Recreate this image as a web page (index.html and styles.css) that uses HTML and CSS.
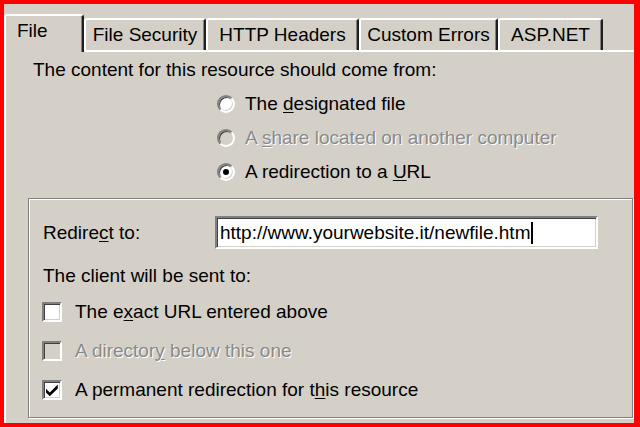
FILE: index.html
```html
<!DOCTYPE html>
<html lang="en">
<head>
<meta charset="utf-8">
<title>File properties</title>
<link rel="stylesheet" href="styles.css">
</head>
<body>
<div class="frame">
  <div class="tabs">
    <div class="tab tab--active tab--file">File</div>
    <div class="tab tab--security">File Security</div>
    <div class="tab tab--headers">HTTP Headers</div>
    <div class="tab tab--errors">Custom Errors</div>
    <div class="tab tab--aspnet">ASP.NET</div>
  </div>
  <div class="page">
    <p class="lead">The content for this resource should come from:</p>
    <div class="options">
      <div class="option"><span class="radio"></span><span>The <u>d</u>esignated file</span></div>
      <div class="option option--disabled"><span class="radio"></span><span>A <u>s</u>hare located on another computer</span></div>
      <div class="option"><span class="radio radio--checked"></span><span>A redirection to a <u>U</u>RL</span></div>
    </div>
    <div class="group">
      <div class="field">
        <span class="field-label">Redire<u>c</u>t to:</span>
        <div class="textbox">http://www.yourwebsite.it/newfile.htm<span class="caret"></span></div>
      </div>
      <p class="group-label">The client will be sent to:</p>
      <div class="checks">
        <div class="check-row"><span class="check"></span><span>The e<u>x</u>act URL entered above</span></div>
        <div class="check-row check-row--disabled"><span class="check"></span><span>A director<u>y</u> below this one</span></div>
        <div class="check-row"><span class="check check--on"><svg viewBox="0 0 16 16" width="16" height="16"><path d="M2 6.8 L5.8 10.4 L13.8 2.6 L13.8 6.4 L5.8 14.2 L2 10.6 Z" fill="#000"/></svg></span><span>A permanent redirection for t<u>h</u>is resource</span></div>
      </div>
    </div>
  </div>
</div>
</body>
</html>
```

FILE: styles.css
```css
html, body {
  margin: 0;
  padding: 0;
  background: #ff0000;
}

.frame {
  width: 640px;
  height: 427px;
  box-sizing: border-box;
  border: 4px solid #ff0000;
  border-right-width: 6px;
  background: #d4d0c8;
  padding-top: 10px;
  display: flex;
  flex-direction: column;
  overflow: hidden;
  font-family: "Liberation Sans", Arial, sans-serif;
  font-size: 19px;
  line-height: 22px;
  color: #000;
}

p { margin: 0; }

u {
  text-decoration: underline;
  text-decoration-thickness: 1px;
  text-underline-offset: 2px;
}

/* tabs */
.tabs {
  display: flex;
  align-items: flex-end;
  height: 36px;
  flex: none;
  position: relative;
  z-index: 1;
}

.tab {
  box-sizing: border-box;
  height: 32px;
  padding-top: 4px;
  border-top: 2px solid #fff;
  border-left: 2px solid #fff;
  border-right: 2px solid #202020;
  border-radius: 3px 3px 0 0;
  box-shadow: inset -1px 0 0 #808080;
  background: #d4d0c8;
  text-align: center;
  white-space: nowrap;
}

.tab--active {
  height: 38px;
  margin-bottom: -2px;
  text-align: left;
  padding-left: 11px;
}

.tab--file { width: 80px; }
.tab--security { width: 122px; }
.tab--headers { width: 153px; }
.tab--errors { width: 139px; }
.tab--aspnet { width: 105px; }

/* page */
.page {
  flex: 1;
  border-top: 2px solid #fff;
  border-left: 2px solid #fff;
  padding: 7px 1px 0 22px;
  display: flex;
  flex-direction: column;
}

.lead {
  margin-left: 5px;
}

.options {
  margin-top: 6px;
  margin-left: 189px;
  display: flex;
  flex-direction: column;
}

.option {
  height: 34px;
  display: flex;
  align-items: center;
  gap: 10px;
  white-space: nowrap;
}

.radio {
  width: 18px;
  height: 18px;
  box-sizing: border-box;
  border-radius: 50%;
  border: 2px solid;
  border-color: #808080 #ffffff #ffffff #808080;
  box-shadow: inset 1px 1px 0 #404040, inset -1px -1px 0 #d4d0c8;
  background: #fff;
  display: flex;
  align-items: center;
  justify-content: center;
  flex: none;
}

.radio--checked::after {
  content: "";
  width: 6px;
  height: 6px;
  border-radius: 50%;
  background: #000;
}

.option--disabled,
.check-row--disabled {
  color: #8a8a8a;
  text-shadow: 1px 1px 0 #fff;
}

.option--disabled .radio,
.check-row--disabled .check {
  background: #d4d0c8;
}

/* group */
.group {
  margin-top: 9px;
  border: 1px solid #808080;
  box-shadow: inset 1px 1px 0 #fff, 1px 1px 0 #fff;
  padding: 17px 0 8px 13px;
  display: flex;
  flex-direction: column;
}

.field {
  display: flex;
  align-items: center;
}

.field-label {
  width: 173px;
  padding-left: 1px;
  box-sizing: border-box;
}

.textbox {
  width: 383px;
  height: 33px;
  box-sizing: border-box;
  border: 2px solid;
  border-color: #808080 #ffffff #ffffff #808080;
  box-shadow: inset 1px 1px 0 #404040, inset -1px -1px 0 #d4d0c8;
  background: #fff;
  padding-left: 3px;
  display: flex;
  align-items: center;
  white-space: nowrap;
}

.caret {
  width: 2px;
  height: 22px;
  background: #000;
  margin-left: 1px;
}

.group-label {
  margin-top: 16px;
  padding-left: 1px;
}

.checks {
  margin-top: 5px;
  display: flex;
  flex-direction: column;
}

.check-row {
  height: 39px;
  display: flex;
  align-items: center;
  gap: 13px;
  white-space: nowrap;
}

.check {
  width: 20px;
  height: 20px;
  box-sizing: border-box;
  border: 2px solid;
  border-color: #808080 #ffffff #ffffff #808080;
  box-shadow: inset 1px 1px 0 #404040, inset -1px -1px 0 #d4d0c8;
  background: #fff;
  display: flex;
  align-items: center;
  justify-content: center;
  flex: none;
}
```
